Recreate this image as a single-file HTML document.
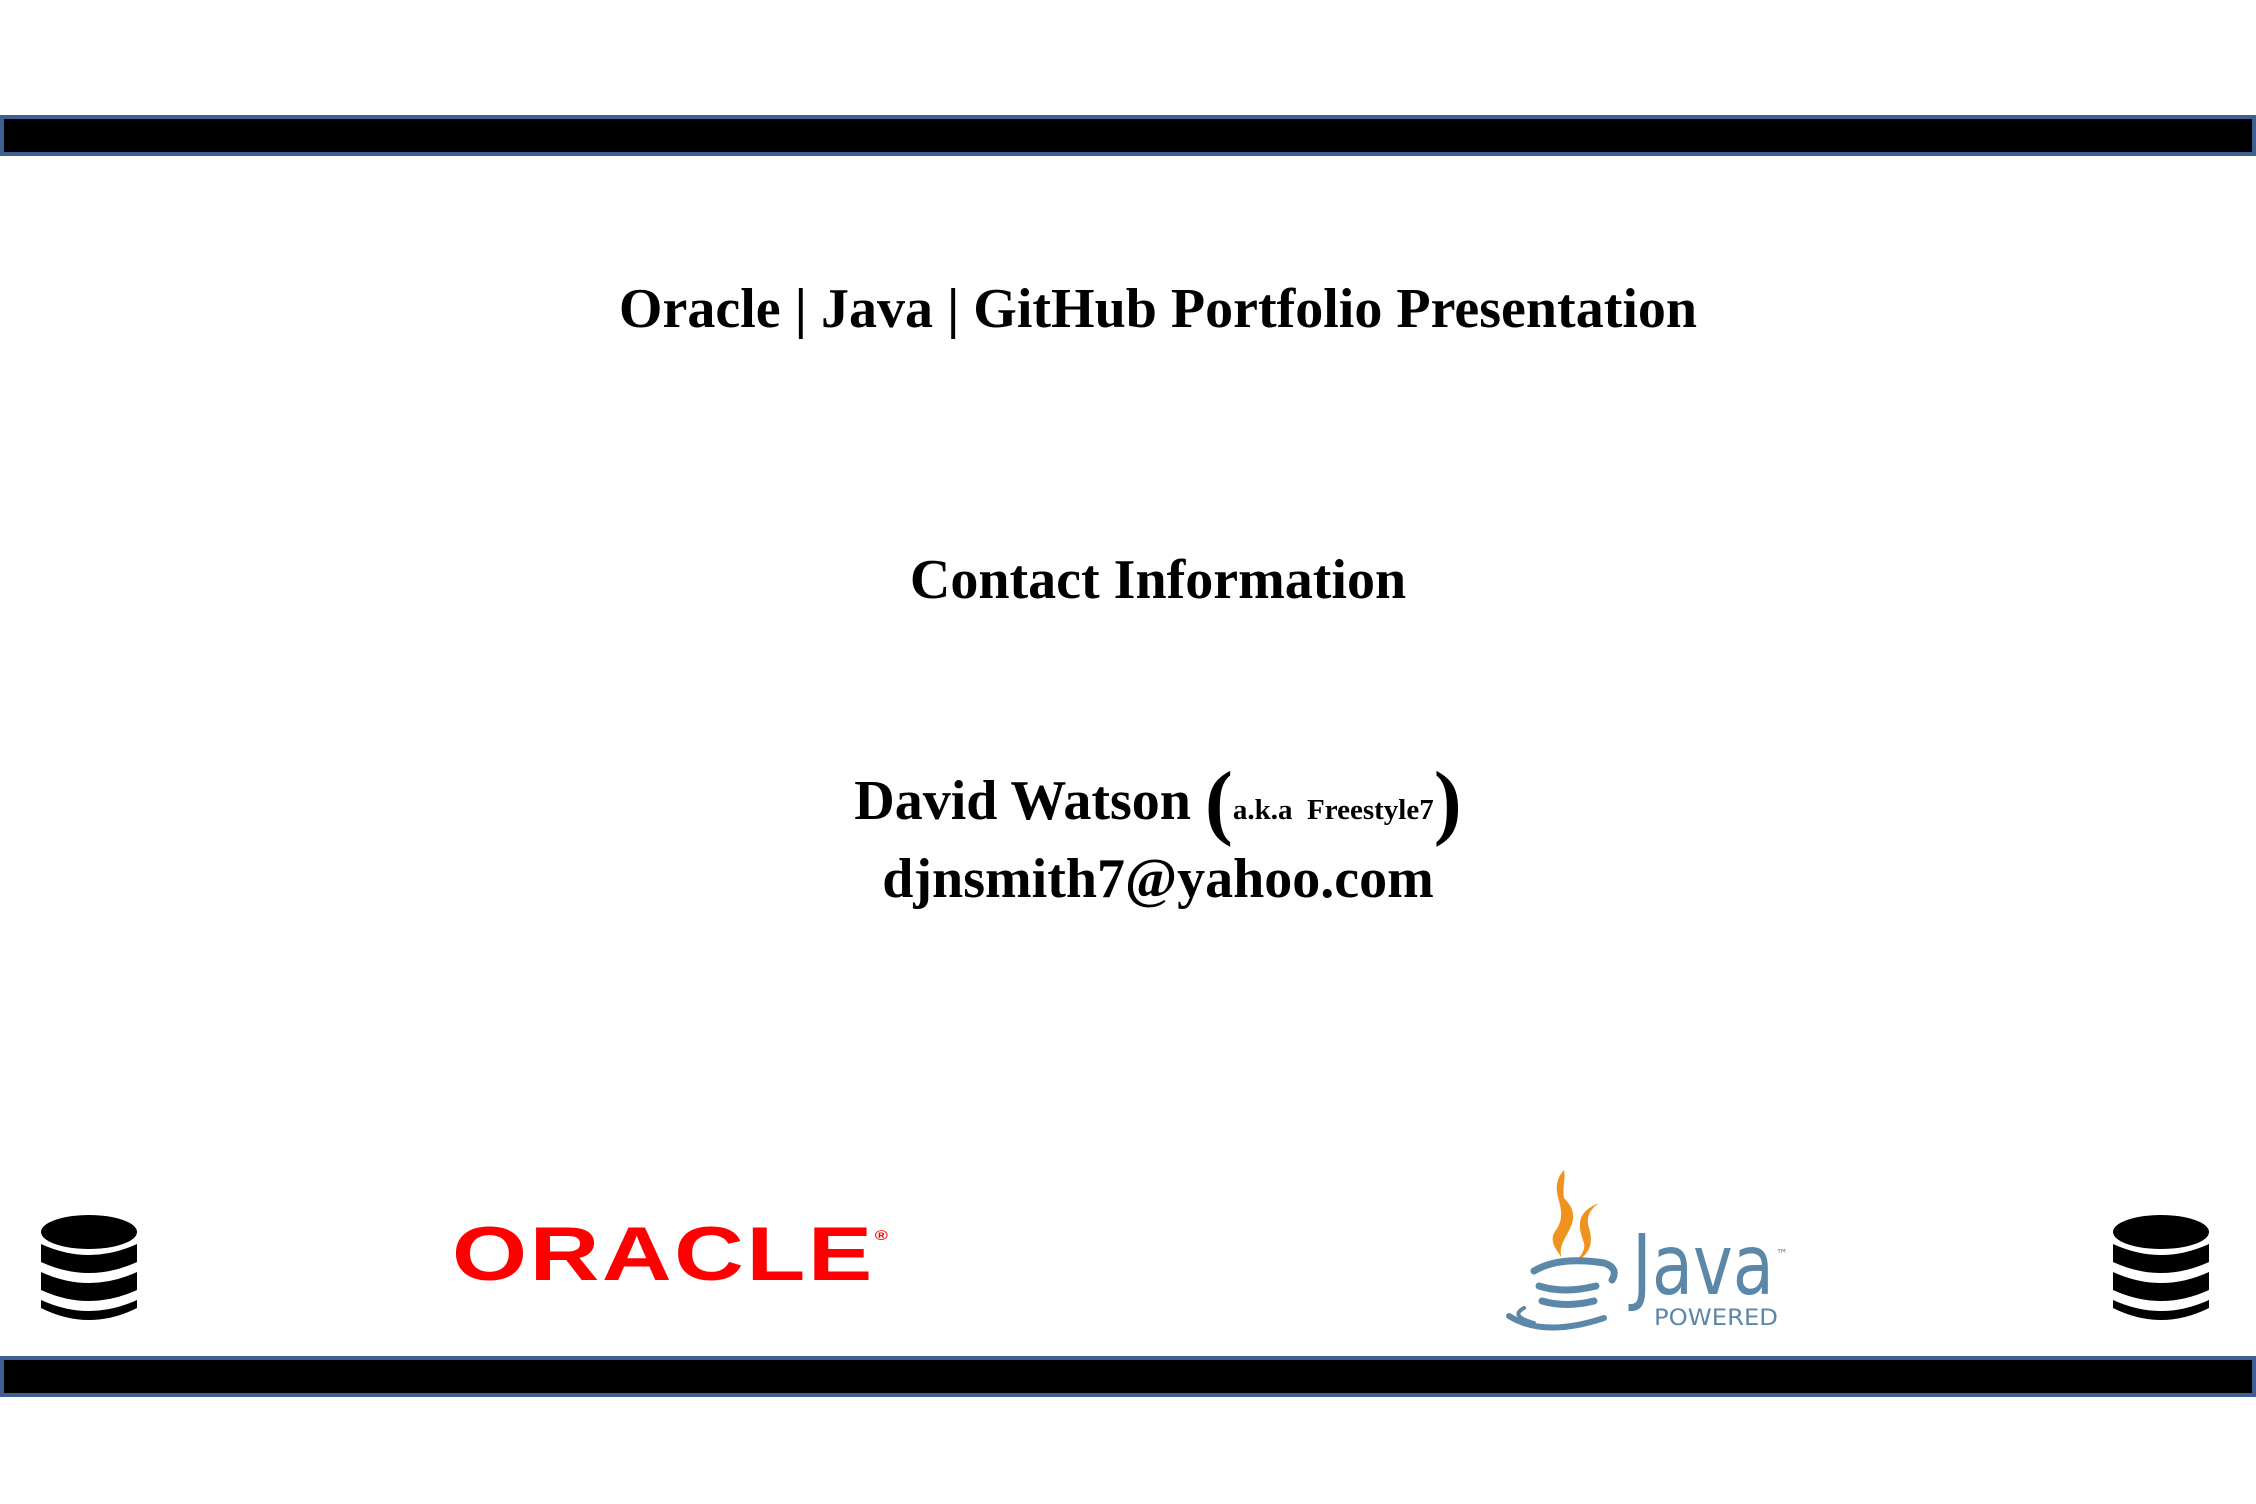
<!DOCTYPE html>
<html><head><meta charset="utf-8"><style>
html,body{margin:0;padding:0;background:#fff;}
body{width:2256px;height:1504px;position:relative;overflow:hidden;font-family:"Liberation Serif",serif;font-weight:bold;color:#000;}
.bar{position:absolute;left:0;width:2256px;background:#000;box-sizing:border-box;border:4px solid #3f5f90;}
.t{position:absolute;left:0;width:2316px;text-align:center;white-space:nowrap;line-height:1;}
</style></head><body>
<div class="bar" style="top:115px;height:41px"></div>
<div class="bar" style="top:1356px;height:41px"></div>

<div class="t" style="top:281px;font-size:56px">Oracle | Java | GitHub Portfolio Presentation</div>
<div class="t" style="top:552px;font-size:56px">Contact Information</div>
<div class="t" style="top:760px;font-size:56px">David Watson <span style="font-size:84px;vertical-align:-10px">(</span><span style="font-size:29px">a.k.a&nbsp; Freestyle7</span><span style="font-size:84px;vertical-align:-10px">)</span></div>
<div class="t" style="top:851px;font-size:56px">djnsmith7@yahoo.com</div>

<svg style="position:absolute;left:40px;top:1214px" width="98" height="112" viewBox="0 0 98 112">
<g fill="#000"><ellipse cx="49" cy="18" rx="48" ry="17"/>
<path d="M1 30 Q49 52 97 30 L97 48 Q49 70 1 48Z"/>
<path d="M1 58 Q49 80 97 58 L97 76 Q49 98 1 76Z"/>
<path d="M1 86 Q49 108 97 86 L97 94 Q49 118 1 94Z"/></g></svg>
<svg style="position:absolute;left:2112px;top:1214px" width="98" height="112" viewBox="0 0 98 112">
<g fill="#000"><ellipse cx="49" cy="18" rx="48" ry="17"/>
<path d="M1 30 Q49 52 97 30 L97 48 Q49 70 1 48Z"/>
<path d="M1 58 Q49 80 97 58 L97 76 Q49 98 1 76Z"/>
<path d="M1 86 Q49 108 97 86 L97 94 Q49 118 1 94Z"/></g></svg>

<div style="position:absolute;left:452px;top:1200px;width:440px;height:70px;color:#f00;font-family:'Liberation Sans',sans-serif;font-weight:bold;font-size:76px;letter-spacing:2px;line-height:70px;transform:scaleX(1.27);transform-origin:left;">ORACLE<span style="font-size:14px;vertical-align:40px">®</span></div>

<svg style="position:absolute;left:1504px;top:1168px" width="300" height="168" viewBox="0 0 300 168" font-weight="normal">
<path d="M60 2 C40 25 70 40 50 65 C45 75 55 85 58 90 C50 70 85 55 60 30 C58 20 62 10 60 2Z" fill="#f0921e"/>
<path d="M95 35 C70 45 75 60 80 75 C82 85 72 92 70 95 C90 85 88 70 85 60 C82 50 85 42 95 35Z" fill="#f0921e"/>
<g fill="none" stroke="#5b87a8" stroke-linecap="round">
<path d="M30 103 Q55 88 100 95 Q115 100 108 112" stroke-width="7"/>
<path d="M35 118 Q60 126 92 118" stroke-width="7"/>
<path d="M38 133 Q62 140 90 133" stroke-width="7"/>
<path d="M5 148 Q40 170 100 150" stroke-width="6"/>
<path d="M20 140 Q5 148 30 155" stroke-width="4"/>
</g>
<text x="128" y="126" font-family="'DejaVu Sans',sans-serif" font-weight="normal" font-size="84" fill="#5b87a8" textLength="142" lengthAdjust="spacingAndGlyphs">Java</text>
<text x="272" y="90" font-family="'DejaVu Sans',sans-serif" font-weight="normal" font-size="12" fill="#5b87a8">™</text>
<text x="150" y="157" font-family="'DejaVu Sans',sans-serif" font-weight="normal" font-size="22" fill="#5b87a8" textLength="124" lengthAdjust="spacingAndGlyphs">POWERED</text>
</svg>
</body></html>
